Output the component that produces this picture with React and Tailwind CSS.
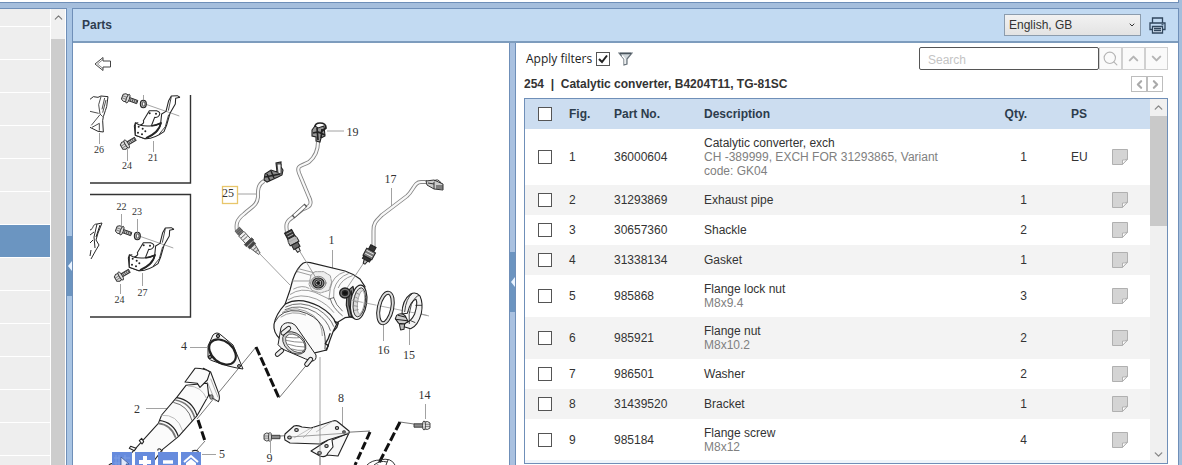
import React from "react";
import { ChevronDown, ChevronLeft, ChevronRight, ChevronUp, Search } from "lucide-react";

const parts = [
  { fig: 1, no: "36000604", name: "Catalytic converter, exch", note: "CH -389999, EXCH FOR 31293865, Variant code: GK04", qty: 1, ps: "EU" },
  { fig: 2, no: "31293869", name: "Exhaust pipe", qty: 1 },
  { fig: 3, no: "30657360", name: "Shackle", qty: 2 },
  { fig: 4, no: "31338134", name: "Gasket", qty: 1 },
  { fig: 5, no: "985868", name: "Flange lock nut", note: "M8x9.4", qty: 3 },
  { fig: 6, no: "985921", name: "Flange nut", note: "M8x10.2", qty: 2 },
  { fig: 7, no: "986501", name: "Washer", qty: 2 },
  { fig: 8, no: "31439520", name: "Bracket", qty: 1 },
  { fig: 9, no: "985184", name: "Flange screw", note: "M8x12", qty: 4 },
];

const sections = Array.from({ length: 14 }, (_, i) => i);

function Sidebar() {
  return (
    <aside className="flex w-[67px] shrink-0 border-t border-r border-[#6f8fb8] bg-white">
      <ul className="min-w-0 flex-1 overflow-hidden">
        <li className="h-[18px] border-b border-white bg-[#eeeeee]" />
        {sections.map((i) => (
          <li
            key={i}
            className={i === 6 ? "h-[33px] border-b border-white bg-[#6b95c1]" : "h-[33px] border-b border-white bg-[#eeeeee]"}
          />
        ))}
      </ul>
      <div className="mr-px ml-px flex w-[14px] flex-col bg-[#cdcdcd]">
        <button aria-label="Scroll up" className="flex h-[30px] justify-center bg-[#f0f0f0] pt-0.5 text-[#777]">
          <ChevronUp size={13} strokeWidth={2} />
        </button>
      </div>
    </aside>
  );
}

function Splitter({ label, top }) {
  return (
    <div className={top}>
      <button aria-label={label} className="flex h-[60px] w-full items-center justify-end bg-[#6b94c0]">
        <svg width="4" height="10" viewBox="0 0 4 10">
          <path d="M4 0V10L0 5Z" fill="#e9f3ff" />
        </svg>
      </button>
    </div>
  );
}

function Cable({ d }) {
  return (
    <g fill="none" strokeLinecap="butt" strokeLinejoin="round">
      <path d={d} stroke="#858585" strokeWidth="4" />
      <path d={d} stroke="#f8f8f8" strokeWidth="2.2" />
    </g>
  );
}

function Bolt() {
  return (
    <g stroke="#333" strokeWidth="0.9" fill="#ddd">
      <path d="M3 -1.7H12V1.7H3Z" fill="#bbb" />
      <path d="M5 -1.7V1.7M7 -1.7V1.7M9 -1.7V1.7M11 -1.7V1.7" strokeWidth="0.7" />
      <path d="M-4 -2.500L-1.500 -4L1.500 -3.500V3.500L-1.500 4L-4 2.500Z" />
      <ellipse cx="2" cy="0" rx="1.5" ry="4.6" />
      <path d="M-4 -1H0.500M-4 1.2H0.500" strokeWidth="0.5" />
    </g>
  );
}

function ShackleGroup() {
  return (
    <g>
      <g transform="translate(126 98) rotate(20)"><Bolt /></g>
      <g transform="translate(125 145) rotate(-31)"><Bolt /></g>
      <g transform="translate(90 90) scale(.3333)" fill="none" stroke="#252525" strokeWidth="3.200" strokeLinejoin="round">
        <path d="M165 42L268 78" stroke="#777" strokeWidth="2" />
        <ellipse cx="160" cy="42" rx="9" ry="11" fill="#aaa" />
        <ellipse cx="161" cy="42" rx="4" ry="6" fill="#fff" strokeWidth="2" />
        <path d="M270 22L262 17L244 18L236 32L228 64L215 72L212 100" />
        <path d="M270 22L257 25L256 42L240 70L230 105L222 125Q190 148 165 146L136 136L133 108L136 100L145 98" />
        <path d="M244 20L235 62M236 74L226 110L208 132" strokeWidth="2.500" />
        <path d="M150 106Q165 100 160 92L178 62L200 62Q213 66 208 76Q203 84 194 82L184 108" fill="#fff" />
        <path d="M136 98Q150 110 180 108Q200 106 213 99Q208 132 165 146L136 136Z" fill="#fff" />
        <path d="M184 108Q200 106 213 99Q206 128 168 144" strokeWidth="5" />
        <g fill="#222" stroke="none">
          <circle cx="146" cy="110" r="3" /><circle cx="158" cy="116" r="3" /><circle cx="144" cy="128" r="3" />
          <circle cx="156" cy="133" r="3" /><circle cx="166" cy="124" r="3" /><circle cx="179" cy="70" r="3" /><circle cx="198" cy="71" r="3" />
        </g>
      </g>
    </g>
  );
}

function ConverterBody() {
  return (
    <g transform="translate(265 255) scale(.3333)" fill="none" stroke="#222" strokeWidth="3.500" strokeLinejoin="round" strokeLinecap="round">
      <path
        d="M75 105L83 75Q96 38 114 25Q122 20 136 23L240 48Q262 55 285 72L300 95L268 185L240 188L218 202L205 228L195 255L185 285L140 296L45 252Q24 232 27 208Q32 178 60 148Z"
        fill="#fbfbfb"
      />
      <g stroke="#8a8a8a" strokeWidth="2.500">
        <path d="M104 42L150 54M98 50L142 62M100 42L96 52M82 78L136 78M86 102Q112 88 132 100" />
        <path d="M150 50L176 50L196 62L200 82L192 106L166 114L140 106L132 88L138 60Z" fill="#eee" strokeDasharray="7 3" />
        <path d="M240 50Q202 62 196 100L192 132M250 56Q216 68 207 104L206 128M262 62Q230 72 220 98" />
        <path d="M196 132Q202 158 232 182M206 128Q212 150 232 168M192 132L206 128" stroke="#555" />
        <path d="M76 118Q108 96 150 112L192 132M70 134Q104 112 154 132Q188 148 206 172" />
        <path d="M52 172Q94 146 146 182Q172 206 172 242M48 186Q80 164 122 180" />
        <path d="M62 156Q104 134 158 162Q196 186 206 214M60 164Q104 144 152 172Q188 196 196 226" stroke="#555" />
      </g>
      <path d="M61 147Q104 124 162 154Q204 178 213 206" />
      <path d="M29 202Q50 160 102 168Q152 180 172 214Q184 242 180 282" strokeWidth="2.500" />
      <path d="M210 200L220 204L215 218L206 228M195 236L190 250L181 266L190 272L183 286" strokeWidth="4" />
      <g>
        <ellipse cx="160" cy="84" rx="23" ry="20" fill="#ddd" stroke="#777" strokeWidth="2.500" />
        <ellipse cx="160" cy="84" rx="17" ry="15" fill="#999" />
        <ellipse cx="160" cy="84" rx="10" ry="9" fill="#eee" />
        <ellipse cx="160" cy="84" rx="5" ry="4" fill="#111" />
      </g>
      <path d="M264 94L246 110L244 150L252 184L270 190L280 176Z" fill="#888" />
      <path d="M252 112V150L260 184M259 108V150L266 180" stroke="#222" strokeWidth="4" />
      <ellipse cx="281" cy="142" rx="24" ry="52" transform="rotate(8 281 142)" fill="#f4f4f4" />
      <ellipse cx="283" cy="142" rx="18" ry="44" transform="rotate(8 283 142)" fill="#ddd" strokeWidth="2.500" />
      <ellipse cx="288" cy="142" rx="10" ry="35" transform="rotate(8 288 142)" fill="#fff" stroke="#888" strokeWidth="2" />
      <path d="M272 112L282 118M268 124L278 130M266 138L277 142M266 152L278 154M269 166L280 164" stroke="#777" strokeWidth="2" />
      <ellipse cx="240" cy="114" rx="16" ry="15" fill="#777" strokeWidth="4" />
      <ellipse cx="240" cy="114" rx="8" ry="7" fill="#111" />
      <path d="M48 218Q52 205 68 203Q82 202 91 211L153 300Q155 316 143 318L122 312L52 282L40 270Z" fill="#f4f4f4" strokeWidth="3" />
      <ellipse cx="88" cy="264" rx="40" ry="28" transform="rotate(42 88 264)" fill="#d6d6d6" strokeWidth="2.500" />
      <ellipse cx="91" cy="265" rx="34" ry="22" transform="rotate(42 91 265)" fill="#fff" strokeWidth="2" />
      <path d="M60 246Q88 250 102 248M62 256Q90 262 112 262M70 268Q94 276 118 276M80 282Q98 288 118 286" stroke="#777" strokeWidth="2.500" />
      <g strokeWidth="15"><path d="M54 234L71 220M37 298L50 287M125 328L137 313" /></g>
      <g strokeWidth="9" stroke="#eee"><path d="M54 234L71 220M37 298L50 287M125 328L137 313" /></g>
    </g>
  );
}

function ExhaustPipe() {
  return (
    <g transform="translate(90 360) scale(.3333)" fill="#fbfbfb" stroke="#222" strokeWidth="3.200" strokeLinejoin="round">
      <path d="M340 66L360 110L385 125Q391 116 386 100L362 36L340 25Z" />
      <path d="M288 76L262 110L215 165L205 190L118 286L92 318H180L218 268L266 229L322 166L356 106L352 70Z" />
      <path d="M352 66L376 124M362 56L384 112" stroke="#888" strokeWidth="2" fill="none" />
      <ellipse cx="364" cy="111" rx="5" ry="7" fill="#999" strokeWidth="2" />
      <path d="M285 66L315 25Q342 24 360 36L352 60L330 82L322 70Z" />
      <g fill="none">
        <path d="M260 113Q306 120 321 166M207 181Q250 186 265 229" strokeWidth="3.500" />
        <path d="M256 120Q300 128 314 173M205 190Q244 194 257 233" stroke="#777" strokeWidth="5" />
        <path d="M250 127Q294 136 306 182" strokeWidth="2" />
        <path d="M214 166Q262 162 278 213M294 78Q334 78 350 116" stroke="#bbb" strokeWidth="3" />
      </g>
      <path d="M118 265L122 259L138 265L133 272ZM148 242L155 235L161 245L156 252ZM204 272Q202 265 210 267L217 274M56 316Q66 306 72 316" />
      <path d="M306 274Q316 268 326 275" fill="none" />
    </g>
  );
}

function Diagram() {
  return (
    <svg width="436" height="422" viewBox="73 43 436 422" className="block shrink-0" role="img" aria-label="Exploded view of catalytic converter">
      <g fill="none" stroke="#333" strokeWidth="1.4">
        <path d="M190.500 95V183H90M90 194.500H190.500V317H90" />
      </g>
      <ShackleGroup />
      <g transform="translate(-6 132)"><ShackleGroup /></g>
      <g transform="translate(90 90) scale(.3333)" fill="none" stroke="#2b2b2b" strokeWidth="3" strokeLinejoin="round">
        <path d="M0 28L10 20L24 22L33 18L54 20L50 50L46 62L40 80L38 92L40 126L24 124L0 112" />
        <path d="M0 64L26 70M33 20L26 44L30 72L38 80M4 106L30 74M6 112L28 100L28 122M44 24L36 58M48 30L38 68" strokeWidth="2.500" />
      </g>
      <g fill="none" stroke="#2b2b2b" strokeWidth="1">
        <path d="M90 230C94 229 92 224 97 224L102 223L98 233L96 240L99 245L96 250L91 259" />
        <path d="M97 224L94 237L95 248M100 225L96 237M90 235L94 232M90 243L93 240M91 250L90 256" />
      </g>

      <g fill="none" stroke="#8a8a8a" strokeWidth="0.8">
        <path d="M99.500 133V144M127.500 149V161M153.500 141V152M143.500 95V100M121.500 214V227M137.500 219V233M120.500 284V294M142.500 273V286" />
        <path d="M238 194H257M327 131H344M391.500 188V206M332.500 250V271M383.500 325V341M409.500 326V345M342.500 407V425M425.500 404V419M270.500 442V453M190 347.500H207M146 408.500H169M202 454.500H216" />
        <path d="M320 357V465M418 313L429 316" />
        <path d="M256 347L197 419M279 398L309 362M205 441L197 450M280 436L370 431M400 422L414 424" stroke="#555" />
      </g>

      <Cable d="M318 142C318 151 315 157 309 162C302 166 296 165 299 173L309 197C313 205 309 207 303 209L293 217C285 222 286 226 287 232" />
      <path d="M306 205L293 217" stroke="#555" strokeWidth="4" />
      <path d="M305 206L294 216" stroke="#fff" strokeWidth="2.500" />
      <g stroke="#222" strokeWidth="1.100" fill="#999">
        <path d="M312 130L315 126L318 128L324 126L325 136L321 138L320 142L316 141L316 137L312 136Z" />
        <path d="M315 127Q315 123 320 123Q326 123 326 128L321 132M313 133L318 132L325 135M317 128L318 140M322 129L321 138" fill="none" strokeWidth="1.7" />
      </g>
      <g transform="translate(289 233) rotate(62)" stroke="#222" strokeWidth="1">
        <path d="M-2 -4H5V4H-2Z" fill="#333" />
        <path d="M5 -4L8 -5L12 -5V5L8 5L5 4Z" fill="#bbb" />
        <path d="M12 -3.500H17V3.500H12Z" fill="#666" />
        <path d="M17 -2L21 -1.500V1.500L17 2Z" fill="#ddd" />
        <path d="M0 -3V3M3 -3V3M8 -5V5" stroke="#aaa" />
      </g>

      <Cable d="M264 181C257 185 258 192 258 197C257 206 251 207 244 214C236 220 236 225 237 231" />
      <g stroke="#222" strokeWidth="1.100" fill="#888">
        <path d="M265 174L271 170L277 172L276 163L281 162L281 167L283 170L282 175L278 177L267 182L264 180Z" />
        <path d="M267 174L270 181M271 171L274 178M265 177L280 174" fill="none" strokeWidth="1.500" />
        <path d="M277 164L278 173L281 174V164Z" fill="#eee" strokeWidth="0.8" />
      </g>
      <g transform="translate(238 230) rotate(48)" stroke="#555" strokeWidth="0.9">
        <path d="M-1 -3H5V3H-1Z" fill="#777" />
        <path d="M5 -3.500H15V3.500H5Z" fill="#eee" />
        <path d="M15 -5H18V5H15ZM19 -4H22V4H19Z" fill="#444" />
        <path d="M22 -3L32 -1V1L22 3Z" fill="#ddd" />
        <path d="M1 -3V3M3 -3V3M8 -3V3M11 -3V3M25 -2V2M28 -2V2" />
      </g>

      <Cable d="M373.500 248V231C373 223 377 220 382 215L407 196C414 190 414 182 421 182H427" />
      <g stroke="#333" strokeWidth="1" fill="#ccc">
        <path d="M426 181L434 180L443 184L443 190L434 189L427 185Z" />
        <path d="M434 181Q438 178 441 183M428 183L434 184M434 182V189M436 186H443M436 188H443" fill="none" />
      </g>
      <g transform="translate(373 247) rotate(118)" stroke="#222" strokeWidth="1">
        <path d="M-1 -3H4V3H-1Z" fill="#333" />
        <path d="M4 -5H12V5H4Z" fill="#777" />
        <path d="M12 -4H15V4H12Z" fill="#333" />
        <path d="M15 -2L19 -1V1L15 2Z" fill="#bbb" />
        <path d="M6 -4V4M9 -4V4" stroke="#eee" />
      </g>

      <ConverterBody />
      <path d="M259 253L290 285M299 250L316 278M363 264L347 288" stroke="#888" strokeWidth="0.800" />
      <path d="M351 300L427 315.500" stroke="#999" strokeWidth="0.8" strokeDasharray="12 2" />

      <g fill="none">
        <ellipse cx="385.500" cy="308" rx="6.700" ry="15.500" transform="rotate(12 385.500 308)" stroke="#222" strokeWidth="4" />
        <ellipse cx="385.500" cy="308" rx="6.700" ry="15.500" transform="rotate(12 385.500 308)" stroke="#ddd" strokeWidth="2" />
      </g>
      <g transform="translate(240 250) scale(.3333)" fill="#f2f2f2" stroke="#222" strokeWidth="3.200" strokeLinejoin="round">
        <path d="M486 192Q486 150 512 132Q528 124 540 138Q550 160 544 190Q534 228 512 236L492 230L494 218Q512 218 524 192Q534 160 528 148Q512 152 502 190Z" />
        <path d="M540 136Q526 136 514 164Q504 192 508 222M518 130Q498 144 494 186M526 166H546M512 212L526 218" fill="none" strokeWidth="2.500" />
        <path d="M466 206L470 196Q484 186 496 198L504 214L494 222L476 220Z" fill="#ccc" />
        <path d="M478 222L494 222L492 238L482 240Z" fill="#bbb" />
        <path d="M466 208L502 212M474 196L498 202" />
      </g>

      <g fill="none" stroke="#111" strokeWidth="3">
        <path d="M256 347L279 398" strokeDasharray="9 2.500" />
        <path d="M370 432L355 465" strokeDasharray="8 3" />
        <path d="M400 422L378 465" strokeDasharray="9 3" />
        <path d="M198 420L205 441" strokeDasharray="9 3" />
      </g>

      <g fill="#f7f7f7" stroke="#222" strokeWidth="1.100" strokeLinejoin="round">
        <path d="M328 440L311 451L320 456Q326 458 328 453L333 447L332 440L349 433L338 456L327 455" />
        <path d="M285 434L294 426Q297 425 302 427L311 428L333 421Q336 420 338 422L349 431Q350 433 347 434L328 440L320 444L290 443L285 440Q284 437 285 434Z" />
        <path d="M311 428L294 438M314 427L303 438M333 421L316 432" fill="none" stroke="#aaa" strokeWidth="0.700" />
        <g fill="#bbb">
          <ellipse cx="296.500" cy="430" rx="1.800" ry="1.500" /><ellipse cx="289.500" cy="437.500" rx="1.800" ry="1.500" /><ellipse cx="337" cy="428" rx="1.600" ry="1.500" />
          <ellipse cx="344" cy="432" rx="1.300" ry="1.200" /><ellipse cx="326.500" cy="446" rx="1.700" ry="1.500" /><ellipse cx="319.500" cy="453" rx="1.800" ry="1.500" />
        </g>
      </g>
      <path d="M290 437L349 433M320 421V465" stroke="#888" strokeWidth="0.800" />
      <g transform="translate(268 437)"><Bolt /></g>
      <g transform="translate(426 425.500) rotate(180)"><Bolt /></g>
      <g fill="none" stroke="#333">
        <path d="M367 465Q372 460 380 460Q391 457 395 465M374 465Q380 460 387 462M388 460L386 465" />
      </g>

      <g stroke="#222" strokeWidth="1" strokeLinejoin="round">
        <path d="M208 346L213 335Q217 331 221 335L233 345L243 369L237 368L228 366L213 361Q207 359 208 355Z" fill="#f7f7f7" />
        <ellipse cx="222.500" cy="352" rx="15" ry="10.500" transform="rotate(40 222.500 352)" fill="#fff" strokeWidth="2.200" />
        <circle cx="218" cy="336" r="1.700" fill="#777" /><circle cx="210" cy="357" r="1.700" fill="#777" /><circle cx="239" cy="366" r="1.500" fill="#999" />
      </g>

      <ExhaustPipe />

      <rect x="222.500" y="186.500" width="15" height="17" fill="none" stroke="#e8c66b" strokeWidth="1.300" />
      <g fontFamily="Liberation Serif, serif" fill="#333" textAnchor="middle">
        <g fontSize="10">
          <text x="99" y="153">26</text><text x="153" y="161">21</text><text x="127" y="169">24</text>
          <text x="121.500" y="210">22</text><text x="137" y="215">23</text><text x="119.500" y="303">24</text><text x="142.500" y="296">27</text>
        </g>
        <g fontSize="12">
          <text x="228" y="197">25</text><text x="352.500" y="136">19</text><text x="390.500" y="183">17</text><text x="331.500" y="244">1</text>
          <text x="383.500" y="354">16</text><text x="409" y="359">15</text><text x="184" y="350">4</text><text x="137" y="413">2</text>
          <text x="222" y="458">5</text><text x="341" y="402">8</text><text x="424.500" y="399">14</text><text x="269.500" y="462">9</text>
        </g>
      </g>
    </svg>
  );
}

function DiagramPanel() {
  const tool = "flex size-5 items-center justify-center bg-[#668bdd]";
  return (
    <div className="relative w-[437px] shrink-0 overflow-hidden border-r border-[#6f8fb8] bg-white">
      <Diagram />
      <button aria-label="Back" className="absolute top-[13px] left-[21px]">
        <svg width="18" height="16" viewBox="0 0 18 16" fill="#fff" stroke="#444">
          <path d="M1 8L9 1.500V5H16.500V11H9V14.500Z" />
          <path d="M3.500 8L9 3.500M3.500 8L9 12.500" strokeWidth="0.600" />
        </svg>
      </button>
      <div className="absolute top-[409px] left-[39px] flex gap-[3px]">
        <button aria-label="Pan" className={tool}>
          <svg width="20" height="20" viewBox="0 0 20 20">
            <path d="M4 3V17M7 3V17M13 3V17M2 6H18M2 11H18" stroke="#7d9de4" />
            <path d="M9 5V16L12 13L14 17L16 16L14 12H17Z" fill="#dfe8fb" stroke="#3b5596" strokeWidth="0.800" />
          </svg>
        </button>
        <button aria-label="Zoom in" className={tool}>
          <svg width="20" height="20" viewBox="0 0 20 20"><path d="M10 4V16M4 10H16" stroke="#fff" strokeWidth="4" /></svg>
        </button>
        <button aria-label="Zoom out" className={tool}>
          <svg width="20" height="20" viewBox="0 0 20 20"><path d="M5 10H15" stroke="#fff" strokeWidth="3.500" /></svg>
        </button>
        <button aria-label="Fit to view" className={tool}>
          <svg width="20" height="20" viewBox="0 0 20 20">
            <path d="M3 10L10 4L17 10" fill="none" stroke="#fff" strokeWidth="2" />
            <path d="M5 11L10 7L15 11V18H5Z" fill="#fff" />
          </svg>
        </button>
      </div>
    </div>
  );
}

function Checkbox({ label }) {
  return (
    <input
      type="checkbox"
      aria-label={label}
      className="block size-[14px] appearance-none border border-[#555] bg-white"
    />
  );
}

function NoteIcon() {
  return (
    <svg width="16" height="16" viewBox="0 0 16 16">
      <path d="M0.500 0.500H15.500V10.500L10.500 15.500H0.500Z" fill="#d4d4d4" stroke="#b0b0b0" />
      <path d="M15.500 10L12.500 11H10.500V15.500Z" fill="#fff" stroke="#b0b0b0" />
    </svg>
  );
}

function PartsTable() {
  return (
    <table className="w-full table-fixed border-collapse text-left">
      <colgroup>
        <col className="w-[36px]" />
        <col className="w-[45px]" />
        <col className="w-[90px]" />
        <col />
        <col className="w-[60px]" />
        <col className="w-[69px]" />
        <col className="w-[46px]" />
      </colgroup>
      <thead>
        <tr className="h-[30px] bg-[#ccddf0] text-[#2c3c4c]">
          <th className="pl-[13px]"><Checkbox label="Select all parts" /></th>
          <th className="pl-2">Fig.</th>
          <th className="pl-2">Part No.</th>
          <th className="pl-2">Description</th>
          <th className="pr-2 text-right">Qty.</th>
          <th className="pl-9">PS</th>
          <th aria-label="Notes" />
        </tr>
      </thead>
      <tbody>
        {parts.map((p) => (
          <tr key={p.fig} className="h-[30px] even:bg-[#f3f3f3]">
            <td className="pl-[13px]"><Checkbox label={`Select ${p.name}`} /></td>
            <td className="pl-2">{p.fig}</td>
            <td className="pl-2">{p.no}</td>
            <td className="py-[7px] pl-2">
              <p>{p.name}</p>
              {p.note && <p className="max-w-[250px] text-[#808080]">{p.note}</p>}
            </td>
            <td className="pr-2 text-right">{p.qty}</td>
            <td className="pl-9">{p.ps}</td>
            <td className="pl-2">
              <button aria-label={`Notes for ${p.name}`} className="block"><NoteIcon /></button>
            </td>
          </tr>
        ))}
      </tbody>
    </table>
  );
}

function PartsPanel() {
  const tool = "flex h-[23px] w-[23px] items-center justify-center border border-[#d0d0d0] bg-[#fafafa] text-[#b5b5b5]";
  const pager = "flex size-4 items-center justify-center border border-[#bdbdbd] bg-white text-[#aaa]";
  return (
    <section className="flex min-w-0 flex-1 flex-col border-l border-[#6f8fb8] bg-white pr-2.5 pb-px pl-2">
      <div className="flex items-center pt-1">
        <label htmlFor="filters" className="pl-0.5 font-['Open_Sans',sans-serif] text-[12px] text-[#222]">Apply filters</label>
        <span className="relative ml-1 flex">
          <input id="filters" type="checkbox" defaultChecked className="peer size-[14px] appearance-none border border-[#555] bg-white" />
          <svg width="14" height="14" viewBox="0 0 14 14" className="pointer-events-none absolute inset-0 hidden peer-checked:block">
            <path d="M3 7L6 10L11 3.500" fill="none" stroke="#222" strokeWidth="2" />
          </svg>
        </span>
        <button aria-label="Filter settings" className="ml-2">
          <svg width="15" height="14" viewBox="0 0 15 14">
            <path d="M1 1H14L9 7V12L6 13V7Z" fill="#cfd6da" stroke="#69737b" strokeWidth="1.200" />
            <path d="M2 1.500H13" stroke="#4b555d" strokeWidth="1.500" />
            <path d="M4 3.500L7 7V12" stroke="#fff" fill="none" strokeWidth="1.200" />
          </svg>
        </button>
        <div className="ml-auto flex">
          <input
            type="text"
            aria-label="Search"
            placeholder="Search"
            className="h-[23px] w-[180px] rounded-[2px] border border-[#555] px-2 pt-0.5 placeholder:text-[#c4c4c4]"
          />
          <button aria-label="Find" className={tool}><Search size={17} strokeWidth={1.6} /></button>
          <button aria-label="Previous match" className={tool}><ChevronUp size={15} strokeWidth={3.2} /></button>
          <button aria-label="Next match" className={tool}><ChevronDown size={15} strokeWidth={3.2} /></button>
        </div>
      </div>
      <div className="flex h-7 shrink-0 items-center justify-between pr-[5px]">
        <h2 className="font-bold text-[#333]">254&nbsp; |&nbsp; Catalytic converter, B4204T11, TG-81SC</h2>
        <div className="flex">
          <button aria-label="Previous group" className={pager}><ChevronLeft size={13} strokeWidth={4} /></button>
          <button aria-label="Next group" className={pager}><ChevronRight size={13} strokeWidth={4} /></button>
        </div>
      </div>
      <div className="flex min-h-0 flex-1 border border-[#6f8fb8] bg-[#eef5fb]">
        <div className="mb-[3px] min-w-0 flex-1 overflow-hidden bg-white"><PartsTable /></div>
        <div className="flex w-[17px] shrink-0 flex-col bg-[#f0f0f0] text-[#888]">
          <button aria-label="Scroll table up" className="flex h-[17px] items-center justify-center"><ChevronUp size={13} strokeWidth={2.5} /></button>
          <div className="h-[110px] bg-[#c9c9c9]" />
          <button aria-label="Scroll table down" className="mt-auto flex h-[17px] items-center justify-center"><ChevronDown size={13} strokeWidth={2.5} /></button>
        </div>
      </div>
    </section>
  );
}

export default function App() {
  return (
    <div className="flex h-screen flex-col overflow-hidden bg-[#a5bedc] font-['Liberation_Sans',Arial,sans-serif] text-[12px] leading-[14px] text-[#333]">
      <div className="mr-[3px] h-[3px] shrink-0 border-r border-b border-[#6f8fb8] bg-white" />
      <div className="mt-[5px] flex min-h-0 flex-1">
        <Sidebar />
        <Splitter label="Collapse section list" top="w-[5px] shrink-0 bg-[#a9c5e4] pt-[228px]" />
        <main className="mr-[3px] flex min-w-0 flex-1 flex-col border border-b-0 border-[#6f8fb8]">
          <header className="flex h-[34px] shrink-0 items-center border-b-2 border-[#7d9cbd] bg-[#c2daf2] pr-3 pl-[9px]">
            <h1 className="font-bold text-[#2e3d50]">Parts</h1>
            <div className="relative ml-auto">
              <select aria-label="Language" className="block h-[22px] w-[137px] appearance-none border border-[#8c9cad] bg-linear-to-b from-[#f2f2f2] to-[#e3e3e3] pl-1">
                <option>English, GB</option>
              </select>
              <ChevronDown size={8} strokeWidth={3} className="pointer-events-none absolute top-[7px] right-[5px]" />
            </div>
            <button aria-label="Print" className="ml-2">
              <svg width="17" height="17" viewBox="0 0 17 17" fill="none" stroke="#30465d" strokeWidth="1.300">
                <path d="M3.500 5.500V1H13.500V5.500M3.500 12.500H1V6H16V12.500H13.500" />
                <path d="M3.500 9.500H13.500V16H3.500Z" fill="#dbe9f7" />
                <path d="M5 11.500H12M5 13.500H12" strokeWidth="1.500" />
                <path d="M12.500 7.700H14.500" strokeWidth="1" />
              </svg>
            </button>
          </header>
          <div className="flex min-h-0 flex-1">
            <DiagramPanel />
            <Splitter label="Collapse diagram" top="w-[5px] shrink-0 bg-[#a9c1e0] pt-[209px]" />
            <PartsPanel />
          </div>
        </main>
      </div>
    </div>
  );
}
